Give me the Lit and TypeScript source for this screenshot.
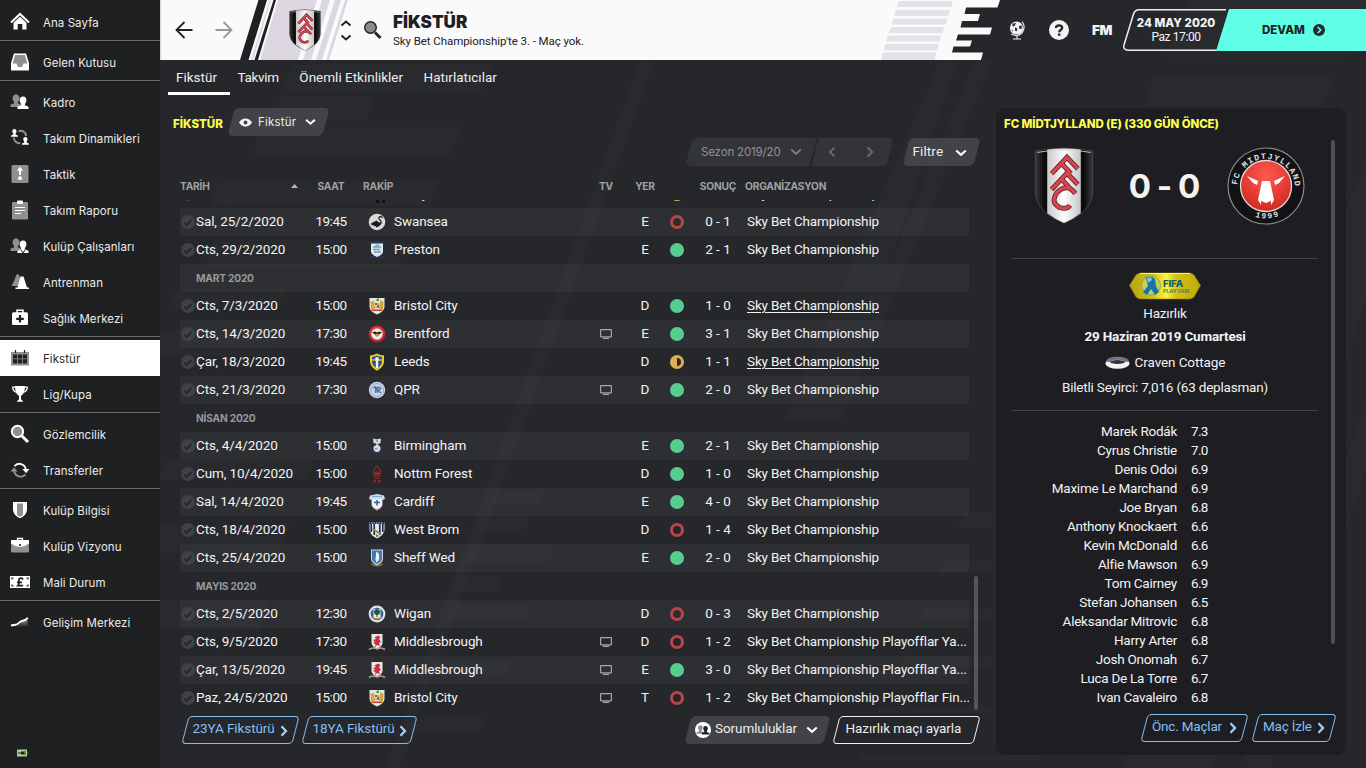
import { LitElement, html, css, svg, nothing } from "lit";
import { customElement } from "lit/decorators.js";
import { classMap } from "lit/directives/class-map.js";

/* ---------- sidebar ---------- */
const navGroups: [string, string][][] = [
  [["home", "Ana Sayfa"]],
  [["inbox", "Gelen Kutusu"]],
  [["squad", "Kadro"], ["dyn", "Takım Dinamikleri"], ["tactic", "Taktik"], ["report", "Takım Raporu"], ["staff", "Kulüp Çalışanları"], ["training", "Antrenman"], ["medic", "Sağlık Merkezi"]],
  [["calendar", "Fikstür"], ["cup", "Lig/Kupa"]],
  [["scout", "Gözlemcilik"], ["transfer", "Transferler"]],
  [["shield", "Kulüp Bilgisi"], ["case", "Kulüp Vizyonu"], ["money", "Mali Durum"]],
  [["dev", "Gelişim Merkezi"]],
];

const person = (x: number, y: number, c: string, s = 1) => svg`<path transform="translate(${x} ${y}) scale(${s})" fill=${c} d="M5.500 0C7.700 0 9 1.500 8.900 3.800C8.800 5.500 8.200 6.600 7.400 7.400V8.800L11 10.300V12.500H0V10.300L3.600 8.800V7.400C2.800 6.600 2.200 5.500 2.100 3.800C2 1.500 3.300 0 5.500 0Z"/>`;
const G = "#8f9090", W = "#ffffff", D = "#1f2022";
const icons: Record<string, unknown> = {
  home: svg`<path fill="none" stroke="#fff" stroke-width="2" d="M1 10.500L10 2L19 10.500"/><path fill="#fff" d="M3.500 10.800L10 4.700L16.500 10.800V17.500H12.300V12H7.700V17.500H3.500Z"/>`,
  inbox: svg`<path fill="#fff" d="M4 1.500H16L19 11V18.500H1V11Z"/><path fill=${G} d="M5 3H15L17.300 11.500H13.500L12 15H8L6.500 11.500H2.700Z"/>`,
  squad: svg`${person(.5, 2.500, G, 1)}${person(7.500, 4.500, W, 1)}`,
  dyn: svg`${person(1, 1, W, .62)}${person(12, 9, W, .62)}<path fill="none" stroke=${G} stroke-width="2" d="M8.500 3.500C12 1.500 15.500 3.500 16.200 8M3.800 9.500C4 13 6.500 15.500 10.300 15.200"/>`,
  tactic: svg`<rect x="1.500" y="1" width="17" height="18" rx="1.500" fill=${G}/><path stroke="#fff" stroke-width="2" d="M10 5V11"/><path fill="#fff" d="M6.800 6.800L10 2.800L13.200 6.800Z"/><circle cx="10" cy="14.200" r="1.900" fill="#fff"/>`,
  report: svg`<rect x="2" y="2" width="16" height="17.500" rx="1.200" fill=${G}/><rect x="7" y="0.500" width="6" height="3.500" rx="1" fill="#fff"/><path stroke="#fff" stroke-width="1.100" d="M5 7.500H15M5 10.500H15M5 13.500H11"/>`,
  staff: svg`${person(.5, 2.500, G, 1)}${person(7.500, 4.500, W, 1)}<path stroke=${D} stroke-width="1" fill="none" d="M10.800 13.500L13 17L15.200 13.500"/>`,
  training: svg`<path fill=${G} d="M6.500 2.500H9L12 14H1.500Q4.500 9 6.500 2.500Z"/><path fill="#fff" d="M10.500 4.500H13.500L17 15.500H19V17H5.500V15.500H7.500Z"/>`,
  medic: svg`<path fill="none" stroke="#fff" stroke-width="1.500" d="M7 5V2.300H13V5"/><rect x="2" y="4.300" width="16" height="12.700" rx="1.500" fill="#fff"/><path stroke=${D} stroke-width="2.200" d="M10 7V14.500M6.200 10.800H13.800"/>`,
  calendar: svg`<rect x="1" y="4" width="18" height="13.500" fill=${G}/><path stroke=${D} stroke-width="1.200" d="M5.500 2V5M14.500 2V5"/><path fill=${D} d="M3 6.500H7.200V10.500H3ZM8 6.500H12V10.500H8ZM12.800 6.500H17V10.500H12.800ZM3 11.300H7.200V15.500H3ZM8 11.300H12V15.500H8ZM12.800 11.300H17V15.500H12.800Z"/>`,
  cup: svg`<path fill="#fff" d="M5 2H15C15 7 13.500 10.500 11 11.800V15C11 16 13 16.200 13 17.800H7C7 16.200 9 16 9 15V11.800C6.500 10.500 5 7 5 2Z"/><path fill="none" stroke="#fff" stroke-width="1.300" d="M5.500 3.200H2.700C2.700 6 4 7.500 7 8.500M14.500 3.200H17.300C17.300 6 16 7.500 13 8.500"/>`,
  scout: svg`<circle cx="7.500" cy="7.500" r="5.700" fill=${G} stroke="#fff" stroke-width="1.900"/><path stroke="#fff" stroke-width="3" d="M12 12L18 18"/>`,
  transfer: svg`<path fill="none" stroke="#fff" stroke-width="1.900" d="M4.500 6.200C8 2 15 3.500 16 10"/><path fill="#fff" d="M12.500 9H19.500L16 13.200Z"/><path fill="none" stroke=${G} stroke-width="1.900" d="M15.500 14.500C12 18.300 5 17 4 10.500"/><path fill=${G} d="M0.500 11.500H7.500L4 7.300Z"/>`,
  shield: svg`<path fill="#fff" d="M3 2H17V9C17 13.500 14 16.500 10 18.200C6 16.500 3 13.500 3 9Z"/><path fill=${G} d="M7 3.500H13V15Q11.500 16.200 10 16.800Q8.500 16.200 7 15Z"/>`,
  case: svg`<path fill="none" stroke="#fff" stroke-width="1.300" d="M7.500 4.500V2.500H12.500V4.500"/><rect x="1" y="4" width="18" height="12.500" rx="1" fill=${G}/><path fill="#fff" d="M1 5Q1 4 2 4H18Q19 4 19 5V7.500Q14.500 11 10 11Q5.500 11 1 7.500Z"/><rect x="9.200" y="8" width="1.600" height="2" fill=${D}/>`,
  money: svg`<path fill="#fff" d="M0 4H20V16H0Z"/><path fill="none" stroke=${D} stroke-width="1.800" d="M13 7.500C12 5.500 8.800 5.800 8.900 8.500C9 10.500 9.700 12 8 13.600H13.200M7 10.300H12"/><path stroke=${D} stroke-width="1.200" d="M1.500 6H3.500M2 5.500V7.500M16.500 6H18.500M18 5.500V7.500M1.500 14H3.500M2 12.500V14.500M16.500 14H18.500M18 12.500V14.500"/>`,
  dev: svg`<defs><linearGradient id="dg" x1="0" y1="0" x2="0" y2="1"><stop offset="0" stop-color="#999"/><stop offset="1" stop-color="#1f2022"/></linearGradient></defs><path fill="url(#dg)" d="M1 14.500L7 13L11 9.500L17.500 7V15H1Z"/><path fill="none" stroke="#fff" stroke-width="1.900" d="M1 13.500L5.500 12.800C8.500 12.500 9 9.500 12 9C14 8.700 16 8.200 17.800 5.800"/>`,
};

/* ---------- fixtures ---------- */
type Row = { m?: string; d?: string; t?: string; c?: string; o?: string; tv?: boolean; v?: string; r?: string; s?: string; k?: string; u?: boolean };
const L = "Sky Bet Championship";
const rows: Row[] = [
  { d: "Cum, 21/2/2020", t: "19:45", c: "derby", o: "Derby", v: "D", r: "d", s: "1 - 1" },
  { d: "Sal, 25/2/2020", t: "19:45", c: "swansea", o: "Swansea", v: "E", r: "l", s: "0 - 1" },
  { d: "Cts, 29/2/2020", t: "15:00", c: "preston", o: "Preston", v: "E", r: "w", s: "2 - 1" },
  { m: "MART 2020" },
  { d: "Cts, 7/3/2020", t: "15:00", c: "bristol", o: "Bristol City", v: "D", r: "w", s: "1 - 0", u: true },
  { d: "Cts, 14/3/2020", t: "17:30", c: "brentford", o: "Brentford", tv: true, v: "E", r: "w", s: "3 - 1" },
  { d: "Çar, 18/3/2020", t: "19:45", c: "leeds", o: "Leeds", v: "D", r: "d", s: "1 - 1", u: true },
  { d: "Cts, 21/3/2020", t: "17:30", c: "qpr", o: "QPR", tv: true, v: "D", r: "w", s: "2 - 0" },
  { m: "NİSAN 2020" },
  { d: "Cts, 4/4/2020", t: "15:00", c: "birmingham", o: "Birmingham", v: "E", r: "w", s: "2 - 1" },
  { d: "Cum, 10/4/2020", t: "15:00", c: "forest", o: "Nottm Forest", v: "D", r: "w", s: "1 - 0" },
  { d: "Sal, 14/4/2020", t: "19:45", c: "cardiff", o: "Cardiff", v: "E", r: "w", s: "4 - 0" },
  { d: "Cts, 18/4/2020", t: "15:00", c: "westbrom", o: "West Brom", v: "D", r: "l", s: "1 - 4" },
  { d: "Cts, 25/4/2020", t: "15:00", c: "sheff", o: "Sheff Wed", v: "E", r: "w", s: "2 - 0" },
  { m: "MAYIS 2020" },
  { d: "Cts, 2/5/2020", t: "12:30", c: "wigan", o: "Wigan", v: "D", r: "l", s: "0 - 3" },
  { d: "Cts, 9/5/2020", t: "17:30", c: "boro", o: "Middlesbrough", tv: true, v: "D", r: "l", s: "1 - 2", k: L + " Playofflar Ya..." },
  { d: "Çar, 13/5/2020", t: "19:45", c: "boro", o: "Middlesbrough", tv: true, v: "E", r: "w", s: "3 - 0", k: L + " Playofflar Ya..." },
  { d: "Paz, 24/5/2020", t: "15:00", c: "bristol", o: "Bristol City", tv: true, v: "T", r: "l", s: "1 - 2", k: L + " Playofflar Fin..." },
];

const bristol = svg`<path fill="#e8e4dc" d="M1.500 1H16.500V10Q16 15 9 17.500Q2 15 1.500 10Z"/><path fill="#d3a437" d="M2.500 5L6 3.500L7 12H3ZM15.500 5L12 3.500L11 12H15Z"/><path fill="#c23a35" d="M3 12.500H15L13.500 14H4.500ZM7 6H9V8H7Z"/><path fill="#3d9a53" d="M9 1.500H11V4H8ZM9 8H11V11H9Z"/><path fill="#b7b2aa" d="M7 9H9V11H7ZM9 6H11V8H9Z"/>`;
const boro = svg`<path fill="#e9e6e6" d="M3.500 1H14.500V10Q14 13.500 9 15.500Q4 13.500 3.500 10Z"/><path fill="#ca2f3b" d="M10 2.500L12.500 4L11 6L13 9L11 10L12 13L9 12L7 14L7.500 11L5 10L7 8.500L5 7L8 6L6.500 4.500Z"/><path fill="none" stroke="#b5a0a2" stroke-width="1.500" d="M1 16.500Q5 14 9 16Q13 14 17 16.500"/>`;
const crests: Record<string, unknown> = {
  derby: svg`<path fill="#111" d="M8 6H17V18H14V15H11V18H8Z"/>`,
  swansea: svg`<circle cx="9" cy="9" r="8.300" fill="#d9d8d8"/><path fill="none" stroke="#1c1c1e" stroke-width="1.200" d="M14.500 4.800Q12 2.500 10.800 4.800C10.500 7 14.500 7 13 10.500"/><path fill="#1c1c1e" d="M3 10.500L8.500 7.500L11 9.500L13.500 9.500Q13 13 8 14.500L8 13L5.500 13.500L6 12L3.500 12.300Z"/>`,
  preston: svg`<path fill="none" stroke="#2c3558" stroke-width="1.800" d="M1 1.500H17M1 17Q5 14.500 9 16.500Q13 14.500 17 17"/><path fill="#dfe9ef" d="M3 2.500H15V11Q14.500 14 9 16Q3.500 14 3 11Z"/><path stroke="#6f9fc0" stroke-width="1.400" d="M5 6H13M5 8.500H12M6 11H13"/><path fill="#7fb0cf" d="M7.500 3.500H11V6H7.500Z"/>`,
  bristol,
  brentford: svg`<circle cx="9" cy="9" r="8.400" fill="#c2242d"/><circle cx="9" cy="9" r="5.600" fill="#efeae6" stroke="#f1c9c9" stroke-width=".5"/><path fill="#222" d="M4 7.500L7 6.500L9 7.500L11 6.500L14 7.500L11 9.500Q9 13.500 7 9.500Z"/><path fill="#e2a927" d="M7.500 8.800H10.500V10.800H7.500Z"/><path stroke="#e98d90" stroke-width=".8" stroke-dasharray="1 1" fill="none" d="M2.200 9A6.800 6.800 0 0 1 15.800 9"/>`,
  leeds: svg`<path fill="#e9cf2a" d="M2 2.500Q5.500 2.500 9 0.500Q12.500 2.500 16 2.500V9Q15.500 14 9 17.700Q2.500 14 2 9Z"/><path fill="#2b4f94" d="M4 4Q7 3.500 9 2.500Q11 3.500 14 4V9Q13.500 12.500 9 15.500Q4.500 12.500 4 9Z"/><path stroke="#f2f2ee" stroke-width="2.400" d="M9 5V15"/><path stroke="#e9cf2a" stroke-width="1.300" d="M4 7H14"/><circle cx="9" cy="6" r="1.900" fill="#f2f2ee"/>`,
  qpr: svg`<circle cx="9" cy="9" r="8.200" fill="#cfd9e6"/><circle cx="9" cy="9" r="6.400" fill="none" stroke="#8ba5cb" stroke-width="1"/><path fill="none" stroke="#4e76ae" stroke-width="1.400" d="M5 7.500A2 2 0 1 1 7.500 10M7.500 5V12M9.500 12V6.500H12Q13 8 11.500 9H9.500L13 12"/>`,
  birmingham: svg`<path fill="#d4dae6" d="M5 1.500Q9 3 13 1.500L12.500 6Q9 8 5.500 6ZM9 7Q13 8.500 12.500 12Q12 15 9 15Q6 15 5.500 12Q5 8.500 9 7Z"/><path fill="#2b3551" d="M5 6.500H8V8.500H6ZM10.500 7H12.500V9H11ZM4.500 15H13.500L14.500 17.500H5Z"/><path fill="#8e9bb4" d="M8 3H10V5H8ZM7 11H9.500V12.500H7Z"/>`,
  forest: svg`<path fill="none" stroke="#a92d31" stroke-width="1" d="M5.500 8.500Q4.500 4 9 1Q13.500 4 12.500 8.500Z"/><path fill="#8d2529" d="M5.500 9.500H12.500V11.500H5.500ZM6.500 12.500H11.500V14H6.500ZM5.500 15H8V17.500H6ZM10 15H12.500V17.500H10ZM7 6.500H11V8H7Z"/>`,
  cardiff: svg`<path fill="#c9dcea" d="M2 2.500L9 1L16 2.500L17 6L14.500 7V12Q14 15 9 17.500Q4 15 3.500 12V7L1 6Z"/><path fill="#f2f5f7" d="M4.500 6H13.500V11Q13 14 9 15.500Q5 14 4.500 11Z"/><path stroke="#315fa0" stroke-width="1.600" d="M9 7V12.500M6 9.500H12"/><path stroke="#7faed2" stroke-width="1" d="M4 3.500H14"/><path stroke="#b44b64" stroke-width=".8" d="M5 15L9 17.200L13 15" fill="none"/>`,
  westbrom: svg`<path fill="#e8ebef" d="M1.500 1H16.500V9Q16 14 9 17.500Q2 14 1.500 9Z"/><path stroke="#202f58" stroke-width="1.700" d="M3.200 3V11M6.200 3V14M11.800 3V14M14.800 3V11"/><path fill="#202f58" d="M1.500 1H16.500V3H1.500Z"/><path stroke="#c9cfda" stroke-dasharray="1.500 1" d="M3 2H15"/><path stroke="#a08153" stroke-width="2" d="M4.500 8L13 13"/><path fill="#4e8b4a" d="M7.500 12.500L11 15L8.500 16.500Z"/>`,
  sheff: svg`<path fill="#cfd6dc" d="M3 .500H15V10Q14.500 14 9 16.500Q3.500 14 3 10Z"/><path fill="#4477b5" d="M4 1.500H14V10Q13.500 13 9 15Q4.500 13 4 10Z"/><path fill="#edf1f4" d="M8 3Q11.500 3.500 11 7Q12 10 9 13.500Q6.500 11 8 7Z"/><path fill="none" stroke="#94742f" stroke-width="1.400" d="M3 15Q9 18.500 15 15"/>`,
  wigan: svg`<circle cx="9" cy="9" r="8.400" fill="#dfe6ea"/><circle cx="9" cy="9" r="6.300" fill="#35629e"/><rect x="5.500" y="4" width="7" height="10" fill="#f2f3ef"/><circle cx="9" cy="7" r="3" fill="#245a39"/><path stroke="#b48b3f" stroke-width="1.500" d="M6 13Q9 14.500 12 13" fill="none"/><path stroke="#333" d="M9 9V12"/>`,
  boro,
};

const chev = (c = "#fff") => html`<svg class="chev" viewBox="0 0 12 8"><path fill="none" stroke=${c} stroke-width="2.200" d="M1.200 1.500L6 5.800L10.800 1.500"/></svg>`;
const chevR = (c: string) => html`<svg class="chevr" viewBox="0 0 8 12"><path fill="none" stroke=${c} stroke-width="2.300" d="M1.500 1.200L6 6L1.500 10.800"/></svg>`;

const fulham = (cls: string) => html`<svg class=${cls} viewBox="0 0 60 78">
  <defs><linearGradient id="fw" x1="0" x2="1"><stop offset="0" stop-color="#c9c9cb"/><stop offset=".5" stop-color="#fdfdfd"/><stop offset="1" stop-color="#c5c5c8"/></linearGradient>
  <linearGradient id="fb" x1="0" x2="1"><stop offset="0" stop-color="#3a3a3c"/><stop offset=".15" stop-color="#0c0c0d"/><stop offset=".85" stop-color="#0c0c0d"/><stop offset="1" stop-color="#3a3a3c"/></linearGradient></defs>
  <path fill="url(#fb)" stroke="#4b4b4e" stroke-width=".8" d="M1 4Q16 1 30 1Q44 1 59 4V46Q58 66 30 77Q2 66 1 46Z"/>
  <path fill="url(#fw)" d="M13 2.600Q30 .500 47 2.600V67Q39 73 30 77Q21 73 13 67Z"/>
  <path fill="none" stroke="#d0d0d2" stroke-width=".9" d="M3 5.500Q30 .500 57 5.500"/>
  <g fill="none" stroke="#5d2228" stroke-width="5"><path d="M17.500 27L33 10.500L44 22M28 17L37 27M17.500 43L33 26.500L44 38M28 33L37 43M41.500 47Q33 36 23 46Q16 56 25 61Q33 64 36 59"/></g>
  <g fill="none" stroke="#d94450" stroke-width="3.300"><path d="M17.500 27L33 10.500L44 22M28 17L37 27M17.500 43L33 26.500L44 38M28 33L37 43M41.500 47Q33 36 23 46Q16 56 25 61Q33 64 36 59"/></g></svg>`;

const players: [string, string][] = [["Marek Rodák", "7.3"], ["Cyrus Christie", "7.0"], ["Denis Odoi", "6.9"], ["Maxime Le Marchand", "6.9"], ["Joe Bryan", "6.8"], ["Anthony Knockaert", "6.6"], ["Kevin McDonald", "6.6"], ["Alfie Mawson", "6.9"], ["Tom Cairney", "6.9"], ["Stefan Johansen", "6.5"], ["Aleksandar Mitrovic", "6.8"], ["Harry Arter", "6.8"], ["Josh Onomah", "6.7"], ["Luca De La Torre", "6.7"], ["Ivan Cavaleiro", "6.8"]];

@customElement("fm-sidebar")
class FmSidebar extends LitElement {
  static styles = css`
    :host { display: flex; flex-direction: column; height: 768px; background: #1f2022; color: #ececec; font: 11.500px Inter, "Open Sans", sans-serif; letter-spacing: .06px; }
    .group { padding-top: 3px; border-top: 1px solid #6a6b6d; }
    .group.first { border-color: transparent; }
    .item { display: flex; align-items: center; height: 36px; padding: 2px 0 0 10px; box-sizing: border-box; gap: 13px; }
    .item.on { background: #fff; color: #2a2b2d; }
    svg { width: 20px; height: 20px; display: block; position: relative; top: -1px; }
    .power { margin: auto 0 10px 16px; }
    .power svg { width: 13px; height: 10px; top: 0; }
  `;
  render() {
    return html`${navGroups.map((g, i) => html`<div class=${classMap({ group: true, first: i === 0 })}>
      ${g.map(([k, t]) => html`<div class=${classMap({ item: true, on: k === "calendar" })}><svg viewBox="0 0 20 20">${icons[k]}</svg><span>${t}</span></div>`)}
    </div>`)}
    <div class="power"><svg viewBox="0 0 13 10"><rect x="1" y="1.500" width="10" height="7" fill="#a9cf8f"/><rect x="11" y="3.500" width="1" height="3" fill="#4d5a45"/><path stroke="#222" stroke-width="1" d="M2 5H5M8 4H10M8 6H10"/><path fill="#222" d="M5 3.500H8V6.500H5Z"/></svg></div>`;
  }
}

@customElement("fm-header")
class FmHeader extends LitElement {
  static styles = css`
    :host { display: block; position: relative; height: 60px; font-family: Inter, sans-serif; color: #1f2022; }
    .art { position: absolute; inset: 0; width: 1206px; height: 60px; }
    .bar { position: relative; display: flex; align-items: center; height: 60px; }
    .bar > * { flex: none; }
    .nav { width: 18px; height: 18px; margin-left: 14.500px; }
    .nav.fwd { margin-left: 22px; }
    .crest { width: 32px; height: 42px; margin-left: 56.500px; }
    .updown { width: 12px; height: 22px; margin: 2px 0 0 19px; }
    .find { width: 20px; height: 20px; margin-left: 11px; }
    .titles { margin-left: 10px; width: 602px; }
    .t1 { font-weight: 900; font-size: 17px; line-height: 21px; }
    .t2 { font: 11.500px/16px Roboto, sans-serif; margin-top: 0; white-space: nowrap; letter-spacing: -.07px; }
    .globe { width: 18px; height: 20px; margin-left: 13px; }
    .help { width: 20px; height: 20px; margin-left: 23px; }
    .fm { color: #f4f4f4; font-weight: 900; font-size: 13.500px; margin-left: 23px; width: 22px; letter-spacing: -.3px; }
    .date { color: #f4f4f4; width: 94px; margin-left: 15px; text-align: center; font: 12px/14px Roboto, sans-serif; letter-spacing: -.4px; white-space: nowrap; }
    .date b { display: block; font: 800 11.500px/14px Inter, sans-serif; letter-spacing: .05px; }
    .go { margin-left: 39px; font-weight: 800; font-size: 11.500px; display: flex; align-items: center; gap: 8px; }
    .go svg { width: 12px; height: 12px; }
  `;
  render() {
    return html`
    <svg class="art" viewBox="160 0 1206 60">
      <path fill="#fafafa" d="M160 0H1000L997.500 7.500H966L964.500 14H980L978 21H962L960.500 27.500H992L990 34.500H958L956 40.500H972L970 46.500H953.500L952 52.500H983L981 60H160Z"/>
      <path fill="#dedee2" d="M160 0H161.500V60H160Z"/>
      <path fill="#1f2022" d="M258.500 0H267L248.500 60H240ZM273.500 0H276L258 60H254.500Z"/>
      <path fill="#ddd7e2" d="M269.500 0H271L253 60H251ZM278 0H317L298 60H260ZM322 0H330L311 60H303ZM335 0H341L322 60H316ZM345 0H348L329 60H326Z"/>
      <path fill="#e4e1e8" d="M899 1H953L951 7H897ZM896 10H950L948 16H894ZM893.500 18.500H947.500L945.500 24.500H891.500ZM891 27H944.500L942.500 33H889ZM888 35.500H941.500L939.500 41.500H886ZM885.500 44H939L937 50.500H883.500ZM883 52.500H936.500L934.500 60H881Z"/>
      <path fill="none" stroke="#f1f1ee" stroke-width="1.500" d="M1226 50.300H1128Q1122.500 49.500 1124 45L1133.500 14Q1135 9.700 1139 9.700H1226"/>
      <path fill="#5fffe7" d="M1229 9H1366V51H1216Z"/>
    </svg>
    <div class="bar">
      <svg class="nav" viewBox="0 0 18 18"><path fill="none" stroke="#222" stroke-width="1.800" d="M17.500 9H1.500M9.500 1L1.500 9L9.500 17"/></svg>
      <svg class="nav fwd" viewBox="0 0 18 18"><path fill="none" stroke="#999" stroke-width="1.800" d="M.5 9H16.500M8.500 1L16.500 9L8.500 17"/></svg>
      ${fulham("crest")}
      <svg class="updown" viewBox="0 0 12 22"><path fill="none" stroke="#222" stroke-width="2" d="M1.500 5.500L6 1.500L10.500 5.500M1.500 15.500L6 19.500L10.500 15.500"/></svg>
      <svg class="find" viewBox="0 0 20 20"><circle cx="7.500" cy="7.500" r="5.800" fill="#8c8c8c" stroke="#222" stroke-width="1.400"/><path stroke="#222" stroke-width="2.800" d="M12 12.500L17.500 18"/></svg>
      <div class="titles"><div class="t1">FİKSTÜR</div><div class="t2">Sky Bet Championship'te 3. - Maç yok.</div></div>
      <svg class="globe" viewBox="0 0 18 20"><circle cx="8.500" cy="8" r="6.600" fill="#f1f1f1"/><path fill="#2b2c30" d="M4.500 3.500L8 3L6.500 6L4.500 6.500ZM7 7.500L9.500 8.500L8.500 11.500L7 10.500ZM11 6L14 5.500L13.500 9L11.500 9ZM3.500 9L5 11L4 11.500Z"/><path fill="none" stroke="#f1f1f1" stroke-width="1.100" d="M14 1.500C18 6 16 15 8 15.800L3 14M9 16V18.500M5 19H13"/></svg>
      <svg class="help" viewBox="0 0 20 20"><circle cx="10" cy="10" r="10" fill="#f3f3f3"/><path fill="none" stroke="#26272b" stroke-width="2.300" d="M7 8C7 4.500 13.300 4.500 13.200 8C13.100 9.900 10.300 9.600 10.200 12.200"/><rect x="9" y="13.500" width="2.400" height="2.300" fill="#26272b"/></svg>
      <div class="fm">FM</div>
      <div class="date"><b>24 MAY 2020</b>Paz 17:00</div>
      <div class="go"><span>DEVAM</span><svg viewBox="0 0 12 12"><circle cx="6" cy="6" r="6" fill="#1f2d2e"/><path fill="none" stroke="#5fffe7" stroke-width="1.700" d="M4.700 3L7.700 6L4.700 9"/></svg></div>
    </div>`;
  }
}

const buttonCss = css`
  .btn { position: relative; display: flex; align-items: center; box-sizing: border-box; flex: none; height: 28px; margin: 0 3.500px; padding: 0 7px; white-space: nowrap; color: #ececec; z-index: 0; }
  .btn::before { content: ""; position: absolute; inset: 0; box-sizing: border-box; transform: skewX(-14.500deg); border-radius: 5px; background: #424347; z-index: -1; }
  .btn.dim::before { background: #333438; }
  .btn.line::before { background: none; border: 1.500px solid #f0f0f0; border-radius: 4px; }
  .btn.blue { color: #85bff0; }
  .btn.line.blue::before { border-color: #85bff0; }
  .chev { width: 12px; height: 8px; flex: none; }
  .chevr { width: 8px; height: 12px; flex: none; }
`;

@customElement("fm-fixtures")
class FmFixtures extends LitElement {
  static styles = [buttonCss, css`
    :host { display: block; width: 836px; font: 13.500px Roboto, "Noto Sans", sans-serif; color: #f3f3f3; }
    .top { display: flex; align-items: center; height: 28px; padding: 0 0 0 13px; }
    .h { color: #fbff4d; font: 800 11.500px Inter, sans-serif; width: 52px; padding-top: 3px; flex: none; }
    .view { font: 11.500px Inter, sans-serif; width: 95px; gap: 6px; padding: 0 9px 0 8px; margin-left: 6px; letter-spacing: .2px; }
    .view .chev { margin-left: auto; margin-right: 1px; width: 11px; }
    .eye { width: 13px; height: 9px; }
    .tools { display: flex; height: 28px; padding: 2px 0 0 525.500px; }
    .season { width: 124px; font: 11.500px Inter, sans-serif; color: #929396; padding: 0 11px 0 12px; justify-content: space-between; letter-spacing: -.15px; }
    .arrows { width: 75px; margin-left: -1.500px; padding: 0 16px 0 13px; justify-content: space-between; }
    .filter { width: 70.500px; margin-left: 12px; padding: 0 9px 3px 7px; justify-content: space-between; letter-spacing: .1px; }
    .season::before { border-radius: 5px 0 0 5px; }
    .arrows::before { border-radius: 0 5px 5px 0; }
    .filter .chev, .duty .chev { position: relative; top: 2px; }
    .grid { display: grid; grid-template-columns: 16px 111px 48px 39px 196px 32px 46px 18px 61px 1fr; align-items: center; }
    .head { height: 34px; margin: 0 27px 0 20px; padding-top: 6px; box-sizing: border-box; font: 700 10.200px Inter, sans-serif; color: #a0a1a3; letter-spacing: -.2px; }
    .head .hd { grid-column: 1 / 3; display: flex; justify-content: space-between; align-items: center; padding-right: 9px; }
    .head .opp { grid-column: 4 / 6; padding-left: 8px; }
    .head .comp { margin-left: -2px; }
    .head .score { padding-left: 3px; letter-spacing: -.2px; }
    .tri { width: 7px; height: 4px; }
    .body { display: flex; gap: 5px; height: 512px; padding-left: 20px; }
    .list { width: 789px; height: 512px; overflow: hidden; display: flex; flex-direction: column; justify-content: flex-end; }
    .row { height: 28px; flex: none; white-space: nowrap; padding-bottom: 1px; box-sizing: border-box; letter-spacing: -.09px; }
    .row.grid > span { position: relative; top: -.500px; }
    .row .comp { letter-spacing: -.13px; }
    .alt { background: rgba(255,255,255,.038); }
    .month { font: 700 10.200px/29px Inter, sans-serif; color: #98999b; padding-left: 16px; letter-spacing: -.2px; }
    .chk { width: 14px; height: 14px; display: block; margin: 1px 0 0 1px; }
    .c { text-align: center; }
    .time { letter-spacing: -.5px; }
    .crest { width: 18px; height: 18px; display: block; margin: 1px 0 0 13px; }
    .tv { width: 12px; height: 10px; display: block; margin: 2px auto 0; }
    .res { width: 14px; height: 14px; display: block; margin: 1px auto 0 2px; }
    .score { padding-left: 3px; text-align: center; letter-spacing: 0; }
    .u { text-decoration: underline; text-underline-offset: 2px; }
    .thumb { width: 4px; height: 134px; border-radius: 2px; background: #55565a; align-self: flex-end; margin-bottom: 2px; }
    .foot { display: flex; padding: 4px 16.500px 0 21px; letter-spacing: -.08px; }
    .foot .btn { padding-bottom: 4px; }
    .foot .blue { width: 110.500px; padding: 0 7px 4px 8px; justify-content: space-between; }
    .foot .b2 { width: 108.500px; margin-left: 6px; padding: 0 6px 4px 8px; }
    .foot .chevr { position: relative; top: 2.500px; }
    .foot .duty { width: 138.500px; margin-left: auto; gap: 4px; padding: 0 9px 4px 7px; }
    .duty .chev { margin-left: auto; }
    .duty svg.ppl { width: 16px; height: 16px; flex: none; position: relative; top: 2px; }
    .foot .arr { width: 140.500px; margin-left: 5.500px; padding-left: 10px; }
  `];
  res(r: string) {
    if (r === "w") return svg`<circle cx="7" cy="7" r="7" fill="#57cc91"/>`;
    if (r === "l") return svg`<circle cx="7" cy="7" r="5.500" fill="none" stroke="#bb4545" stroke-width="3"/>`;
    return svg`<circle cx="7" cy="7" r="7" fill="#e0ad50"/><path fill="#26272b" d="M7 3A4 4 0 0 1 7 11Z"/>`;
  }
  render() {
    return html`
    <div class="top"><span class="h">FİKSTÜR</span>
      <div class="btn view"><svg class="eye" viewBox="0 0 13 9"><path fill="#f2f2f2" d="M0 4.500C3-1 10-1 13 4.500C10 10 3 10 0 4.500Z"/><circle cx="6.500" cy="4.500" r="1.900" fill="#424347"/></svg><span>Fikstür</span>${chev()}</div></div>
    <div class="tools">
      <div class="btn dim season"><span>Sezon 2019/20</span>${chev("#77787b")}</div>
      <div class="btn dim arrows"><svg class="chevr" viewBox="0 0 8 12"><path fill="none" stroke="#66676a" stroke-width="2" d="M6.500 1.500L2 6L6.500 10.500"/></svg>${chevR("#66676a")}</div>
      <div class="btn filter"><span>Filtre</span>${chev()}</div>
    </div>
    <div class="grid head"><span class="hd">TARİH<svg class="tri" viewBox="0 0 7 4"><path fill="#b5b6b8" d="M0 4L3.500 0L7 4Z"/></svg></span><span class="c">SAAT</span><span class="opp">RAKİP</span><span class="c">TV</span><span class="c">YER</span><span></span><span class="score">SONUÇ</span><span class="comp">ORGANİZASYON</span></div>
    <div class="body"><div class="list">${rows.map((r, i) => r.m
      ? html`<div class=${classMap({ row: true, month: true, alt: i % 2 === 1 })}>${r.m}</div>`
      : html`<div class=${classMap({ row: true, grid: true, alt: i % 2 === 1 })}>
        <svg class="chk" viewBox="0 0 14 14"><circle cx="7" cy="7" r="7" fill="#404145"/><path fill="none" stroke="#25262a" stroke-width="1.800" d="M3.500 7.500L6 9.800L10.500 4.800"/></svg>
        <span>${r.d}</span><span class="c time">${r.t}</span><svg class="crest" viewBox="0 0 18 18">${crests[r.c!]}</svg><span>${r.o}</span>
        <span>${r.tv ? html`<svg class="tv" viewBox="0 0 12 10"><rect x=".6" y=".6" width="10.800" height="7.300" rx=".5" fill="none" stroke="#a9acae" stroke-width="1.100"/><path stroke="#a9acae" stroke-width="1.200" d="M3 9.400H9"/></svg>` : nothing}</span>
        <span class="c">${r.v}</span><svg class="res" viewBox="0 0 14 14">${this.res(r.r!)}</svg><span class="score">${r.s}</span><span class="comp"><span class=${classMap({ u: !!r.u })}>${r.k ?? L}</span></span></div>`)}
    </div><div class="thumb"></div></div>
    <div class="foot">
      <div class="btn line blue"><span>23YA Fikstürü</span>${chevR("#a5d0f5")}</div>
      <div class="btn line blue b2"><span>18YA Fikstürü</span>${chevR("#a5d0f5")}</div>
      <div class="btn duty"><svg class="ppl" viewBox="0 0 20 20"><circle cx="10" cy="10" r="10" fill="#fff"/>${person(2, 4, "#8f9090", .85)}${person(8.500, 5, "#1f2022", .85)}</svg><span>Sorumluluklar</span>${chev()}</div>
      <div class="btn line arr">Hazırlık maçı ayarla</div>
    </div>`;
  }
}

@customElement("fm-match")
class FmMatch extends LitElement {
  static styles = [buttonCss, css`
    :host { display: flex; flex-direction: column; box-sizing: border-box; width: 350px; height: 647px; padding: 8px 7px 0 8px; border-radius: 9px; background: rgba(26,27,31,.72); font: 13.500px Roboto, "Noto Sans", sans-serif; color: #f3f3f3; letter-spacing: -.2px; }
    .h { color: #fbff4d; font: 800 11.500px/16px Inter, sans-serif; letter-spacing: -.1px; height: 24px; white-space: nowrap; }
    .scroll { display: flex; justify-content: space-between; height: 570px; }
    .thumb { width: 4px; height: 504px; background: #505155; border-radius: 2px; margin-right: 4px; }
    .inner { width: 306px; margin-left: 8px; display: flex; flex-direction: column; align-items: center; text-align: center; }
    .teams { display: flex; align-items: center; align-self: stretch; height: 119px; border-bottom: 1px solid #424347; box-sizing: border-box; padding: 0 13px 27px 22px; justify-content: space-between; }
    .crest { width: 60px; height: 77px; }
    .mid { width: 78px; height: 78px; }
    .sc { font: 700 33px Inter, sans-serif; letter-spacing: -1px; margin-left: 7px; }
    .fifa { width: 72px; height: 28px; margin-top: 13px; }
    .l1 { line-height: 20px; margin-top: 3px; }
    .l2 { font-weight: 700; line-height: 20px; margin-top: 3px; }
    .l3 { display: flex; align-items: center; gap: 5px; line-height: 20px; margin-top: 6px; letter-spacing: -.1px; }
    .l3 svg { width: 25px; height: 13px; }
    .l4 { line-height: 20px; margin-top: 5px; padding-bottom: 13px; align-self: stretch; border-bottom: 1px solid #424347; }
    .players { display: grid; grid-template-columns: 165px 1fr; column-gap: 14px; align-self: stretch; margin-top: 11px; line-height: 19px; }
    .n { text-align: right; letter-spacing: -.25px; } .r { text-align: left; letter-spacing: -.7px; }
    .foot { display: flex; justify-content: flex-end; padding: 4px 2.500px 0 0; }
    .btn { padding: 0 8px 4px; justify-content: space-between; }
    .b1 { width: 101px; margin-right: 6.500px; }
    .b2 { width: 78px; }
    .chevr { position: relative; top: 2px; }
  `];
  render() {
    return html`
    <div class="h">FC MİDTJYLLAND (E) (330 GÜN ÖNCE)</div>
    <div class="scroll"><div class="inner">
      <div class="teams">${fulham("crest")}<span class="sc">0 - 0</span>
        <svg class="mid" viewBox="0 0 78 78"><defs><radialGradient id="mr" cx=".5" cy=".3" r=".8"><stop offset="0" stop-color="#ff5a4f"/><stop offset="1" stop-color="#c9231c"/></radialGradient><path id="arc" d="M10 41A29 29 0 0 1 68 41"/><path id="arc2" d="M20 65.500A33 33 0 0 0 58 65.500"/></defs>
        <circle cx="39" cy="39" r="38" fill="#121214" stroke="#8a8a8c" stroke-width="1.200"/><circle cx="39" cy="39" r="25.500" fill="url(#mr)" stroke="#e3dcdc" stroke-width="1.300"/>
        <text fill="#dedede" font-family="Liberation Mono" font-weight="700" font-size="8.500"><textPath href="#arc" startOffset="3" textLength="86">FC MIDTJYLLAND</textPath></text>
        <text fill="#dedede" font-family="Liberation Mono" font-weight="700" font-size="8"><textPath href="#arc2" startOffset="9" textLength="24">1999</textPath></text>
        <path fill="#fff" d="M35 34H43L47 53L44 58V54L39 56L34 54V58L31 53Z"/><path fill="#fff" d="M20 29L31 34L30 38L26 36ZM58 29L47 34L48 38L52 36Z"/></svg></div>
      <svg class="fifa" viewBox="0 0 72 28"><defs><linearGradient id="gg" x1="0" x2="1"><stop offset="0" stop-color="#b5a510"/><stop offset=".3" stop-color="#cdbc12"/><stop offset=".52" stop-color="#fff23a"/><stop offset=".65" stop-color="#d6c413"/><stop offset="1" stop-color="#b9a80c"/></linearGradient></defs>
        <path fill="url(#gg)" stroke="#8d810f" stroke-width=".6" d="M.5 13.500L7 3Q9 1 12 1H60Q63 1 65 3L71.500 13.500L65 25Q63 27 60 27H12Q9 27 7 25Z"/><path stroke="#f5f0a6" d="M11 1.500H61"/>
        <circle cx="22" cy="13.500" r="9.500" fill="#c7cf52" stroke="#6d9d7a" stroke-width=".8"/><path fill="#1a72a5" d="M17 6Q22 3 26 7L27 14L30 20L26 23L22 17L18 23L14 20L19 14Z"/><path fill="#8fc2d4" d="M18 6L22 5L23 8L19 11Z"/>
        <text x="34" y="15" fill="#1b5a73" font-family="Inter" font-weight="800" font-size="8.500" textLength="20" lengthAdjust="spacingAndGlyphs">FIFA</text><text x="34" y="20.500" fill="#3f7f6e" font-family="Inter" font-weight="600" font-size="5" textLength="26" lengthAdjust="spacingAndGlyphs">PLAY FAIR</text></svg>
      <div class="l1">Hazırlık</div><div class="l2">29 Haziran 2019 Cumartesi</div>
      <div class="l3"><svg viewBox="0 0 25 13"><ellipse cx="12.500" cy="7.500" rx="12" ry="5.200" fill="#f4f4f6"/><path fill="#74738c" d="M.7 5.500Q2 .800 12.500 .800Q23 .800 24.300 5.500L21 6Q17 3.800 12.500 3.800Q8 3.800 4 6Z"/><ellipse cx="12.500" cy="6" rx="7.500" ry="1.900" fill="#33343a"/></svg>Craven Cottage</div>
      <div class="l4">Biletli Seyirci: 7,016 (63 deplasman)</div>
      <div class="players">${players.map(([n, r]) => html`<span class="n">${n}</span><span class="r">${r}</span>`)}</div>
    </div><div class="thumb"></div></div>
    <div class="foot"><div class="btn line blue b1"><span>Önc. Maçlar</span>${chevR("#a5d0f5")}</div><div class="btn line blue b2"><span>Maç İzle</span>${chevR("#a5d0f5")}</div></div>`;
  }
}

@customElement("app-root")
class AppRoot extends LitElement {
  static styles = css`
    :host { display: grid; grid-template-columns: 160px 1206px; width: 1366px; height: 768px; overflow: hidden; position: relative; background: #26272b; z-index: 0; }
    .bg { position: absolute; inset: 0; width: 1366px; height: 768px; z-index: -1; }
    .tabs { display: flex; gap: 20.500px; height: 48px; padding-left: 16px; font: 13.500px/35px Roboto, "Noto Sans", sans-serif; color: #efefef; letter-spacing: 0; }
    .tab { height: 35px; }
    .tab.on { box-sizing: border-box; padding: 0 13px 0 8px; margin: 0 -13px 0 -8px; background: linear-gradient(#fff, #fff) 0 100% / 100% 3px no-repeat; }
    .takvim { letter-spacing: -.3px; }
    .cols { display: flex; }
  `;
  render() {
    const streaks: [number, number, number, number][] = [[292, 65, 200, 26], [280, 96, 95, 24], [262, 127, 200, 27], [220, 180, 220, 26], [215, 238, 200, 28], [175, 290, 110, 20], [160, 330, 120, 26], [165, 460, 150, 20], [160, 525, 130, 28], [160, 600, 110, 30], [1187, 0, 180, 57], [1155, 75, 180, 30], [1133, 125, 180, 27], [1112, 172, 180, 27], [1092, 221, 180, 24], [1070, 269, 180, 23], [1049, 318, 180, 21], [1028, 366, 180, 19], [1007, 415, 180, 18], [964, 512, 180, 16], [944, 560, 180, 13], [924, 609, 170, 11], [904, 657, 170, 10], [880, 706, 180, 7], [860, 754, 180, 6], [495, 490, 50, 14], [480, 517, 50, 16], [470, 545, 85, 17], [457, 575, 46, 16], [452, 604, 80, 16], [432, 661, 80, 15], [410, 718, 75, 16]];
    return html`
    <svg class="bg" viewBox="0 0 1366 768"><rect width="1366" height="768" fill="#26272b"/>
      <g fill="#fff" fill-opacity=".017">${streaks.map(([x, y, w, h]) => svg`<path d="M${x} ${y}H${x + w}L${x + w - h * .38} ${y + h}H${x - h * .38}Z"/>`)}
        <path d="M640 60H655L400 768H385ZM940 60H958L838 420H785ZM975 60H993L842 420H826ZM1366 160V300L1210 768H1120ZM1366 400V470L1270 768H1240Z"/></g></svg>
    <fm-sidebar></fm-sidebar>
    <main><fm-header></fm-header>
      <nav class="tabs"><span class="tab on">Fikstür</span><span class="tab takvim">Takvim</span><span class="tab">Önemli Etkinlikler</span><span class="tab">Hatırlatıcılar</span></nav>
      <div class="cols"><fm-fixtures></fm-fixtures><fm-match></fm-match></div>
    </main>`;
  }
}
